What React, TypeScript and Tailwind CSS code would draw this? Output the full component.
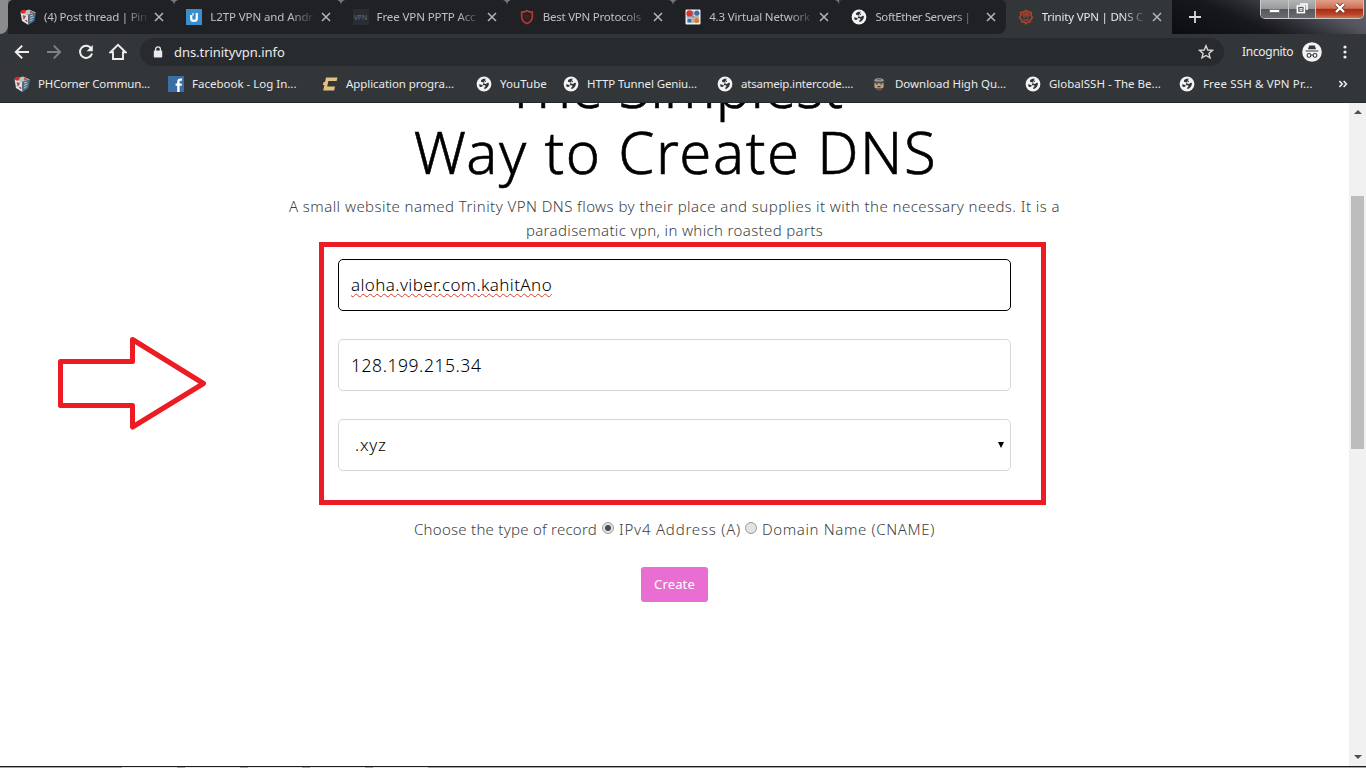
import type { ReactNode } from "react";

function Globe() {
  return (
    <svg viewBox="0 0 16 16" className="size-4 shrink-0">
      <circle cx="8" cy="8" r="7.4" fill="#f1f3f4" />
      <path
        d="M9.4 2.8 C7.4 2.6 5.6 3.2 5 4.6 C4.6 6 5.6 6.4 7 6.2 C8.4 6.1 8.6 7 8.4 8 L10.4 7.8 C11.2 6.8 12 6.6 12.9 7.2 C13 9.8 11 12.6 8.2 13.1 C8 12 8.6 11.2 9.4 10.6 C9.8 9.6 9 9.2 7.8 9.2 C6.4 9.2 5.4 8.6 4.4 8.4 L3.2 8.2 C3.1 9.2 3.4 10 3.9 10.9 L6.2 10.8 L6.6 9.2"
        fill="#303438"
      />
      <path d="M9.4 2.8 L8 4.4 L9.6 5 L9 6.2" fill="none" stroke="#303438" strokeWidth="0.9" />
    </svg>
  );
}

function Cube() {
  return (
    <svg viewBox="0 0 16 16" className="size-4 shrink-0">
      <path d="M0.5 3 L9 0.5 L16 3.5 L8 6 Z" fill="#b9c3c9" />
      <path d="M0.5 3 L8 6 L8.5 16 L2 12 Z" fill="#dfe3e4" />
      <path d="M8 6 L16 3.5 L14.4 12 L8.5 16 Z" fill="#46718f" />
      <path d="M0.8 1.6 L4.5 0.6 L6 3 L3 4.8 L1 4 Z" fill="#e32620" />
      <path d="M3 6.5 L5 9 M5.4 6.6 L3.4 10 M5.5 11 L7.2 12.6" stroke="#b8463f" strokeWidth="1.5" />
      <path d="M10 7 L13 6 M10 9.5 L13.5 8 M10 12 L12.6 10.5" stroke="#d8c2b0" strokeWidth="1" />
      <path d="M10 2.3 L12.5 3.2 L10 4" stroke="#c44a3d" strokeWidth="1.2" fill="none" />
    </svg>
  );
}

function BlueU() {
  return (
    <svg viewBox="0 0 16 16" className="size-4 shrink-0">
      <rect width="16" height="16" fill="#3a8ecb" />
      <path d="M5.2 6 V9.4 C5.2 12.6 10.8 12.6 10.8 9.4 V4" fill="none" stroke="#fff" strokeWidth="2.2" />
      <path d="M7 4 V6.6" stroke="#fff" strokeWidth="1.2" />
    </svg>
  );
}

function VpnBadge() {
  return (
    <span className="flex size-4 shrink-0 items-center justify-center bg-[#292c31] text-[7px] leading-none text-[#66717a]">
      VPN
    </span>
  );
}

function Shield() {
  return (
    <svg viewBox="0 0 16 16" className="size-4 shrink-0">
      <path d="M8 1.8 C6 3 4 3.2 2.7 3.2 V8 C2.7 11.4 5.4 13.4 8 14.6 C10.6 13.4 13.3 11.4 13.3 8 V3.2 C12 3.2 10 3 8 1.8 Z" fill="#2a1f21" stroke="#b8382f" strokeWidth="1.7" />
      <rect x="6" y="6" width="4" height="3.6" fill="#3f2627" />
    </svg>
  );
}

function Grid4() {
  return (
    <svg viewBox="0 0 16 16" className="size-4 shrink-0">
      <rect x="0.5" y="0.5" width="15" height="15" rx="1" fill="#f0f0f0" />
      <circle cx="4.6" cy="4.4" r="3.2" fill="#df3330" />
      <circle cx="11.8" cy="4.2" r="2.6" fill="#3c6ea6" />
      <rect x="2.4" y="9.6" width="4.2" height="4" fill="#3c6ea6" />
      <circle cx="11.6" cy="11.4" r="2.6" fill="#d37c3f" />
      <path d="M1.5 8 H14 M8 2 V14" stroke="#53616d" strokeWidth="0.8" />
    </svg>
  );
}

function Trinity() {
  return (
    <svg viewBox="0 0 16 16" className="size-4 shrink-0" fill="none" stroke="#ad432f">
      <path d="M8 1.5 L10.6 3 L13.4 3.6 L13 6.4 L14.4 8.6 L12.6 10.6 L12 13 L9.6 13 L8 14.8 L6.4 13 L4 13 L3.4 10.6 L1.6 8.6 L3 6.4 L2.6 3.6 L5.4 3 Z" strokeWidth="1.6" />
      <path d="M4 5.8 H12 M5 8.2 H7 M9 8.2 H11 M5 10.8 H11 M8 3 V8 M6 3.4 V5.6 M10 3.4 V5.6" strokeWidth="1.3" />
    </svg>
  );
}

function FacebookIcon() {
  return (
    <svg viewBox="0 0 16 16" className="size-4 shrink-0">
      <rect width="16" height="16" fill="#3a6ea5" />
      <path d="M14 3.6 H12.4 C11 3.6 10.4 4.4 10.4 5.8 V16 M7.6 8.6 H13.8" fill="none" stroke="#fff" strokeWidth="2.4" />
    </svg>
  );
}

function GoldC() {
  return (
    <svg viewBox="0 0 16 16" className="size-4 shrink-0">
      <path d="M4 1.5 H15.5 L14.6 5 H6.4 L5.2 10.6 H13 L12.2 14.4 H1.2 L2.4 9 H0.8 L1.6 6 H3 Z" fill="#e3c184" />
    </svg>
  );
}

function Mascot() {
  return (
    <svg viewBox="0 0 16 16" className="size-4 shrink-0">
      <path d="M3 5 C3 1 13 1 13 5 Z" fill="#8f989d" />
      <rect x="3.4" y="5" width="9.2" height="7.6" rx="2" fill="#c8a27c" />
      <path d="M2.4 6.4 H13.4" stroke="#4d4a45" strokeWidth="1.8" />
      <path d="M6 3.4 H10" stroke="#4c7287" strokeWidth="1.4" />
      <path d="M5 8 H6.8 M9.2 8 H11 M6.4 10.6 H9.6" stroke="#4b3526" strokeWidth="1.2" />
      <path d="M4.4 12.6 H11.6 L10 14.4 H6 Z" fill="#65533f" />
    </svg>
  );
}

type Tab = { icon: ReactNode; title: string; cls: string; active?: boolean };

const tabs: Tab[] = [
  { icon: <Cube />, title: "(4) Post thread | Pin", cls: "tracking-[-0.25px]" },
  { icon: <BlueU />, title: "L2TP VPN and Andr", cls: "tracking-[-0.1px]" },
  { icon: <VpnBadge />, title: "Free VPN PPTP Acc", cls: "tracking-[-0.1px]" },
  { icon: <Shield />, title: "Best VPN Protocols", cls: "tracking-[-0.25px]" },
  { icon: <Grid4 />, title: "4.3 Virtual Network", cls: "tracking-[-0.15px]" },
  { icon: <Globe />, title: "SoftEther Servers |", cls: "tracking-[-0.4px]" },
  { icon: <Trinity />, title: "Trinity VPN | DNS C", cls: "tracking-[-0.2px]", active: true },
];

const bookmarks: { icon: ReactNode; title: string; cls: string }[] = [
  { icon: <Cube />, title: "PHCorner Commun...", cls: "w-[154px] tracking-[-0.17px]" },
  { icon: <FacebookIcon />, title: "Facebook - Log In...", cls: "w-[154px]" },
  { icon: <GoldC />, title: "Application progra...", cls: "w-[154px] tracking-[-0.07px]" },
  { icon: <Globe />, title: "YouTube", cls: "w-[87px] tracking-[0.05px]" },
  { icon: <Globe />, title: "HTTP Tunnel Geniu...", cls: "w-[154px] tracking-[-0.12px]" },
  { icon: <Globe />, title: "atsameip.intercode....", cls: "w-[154px] tracking-[-0.2px]" },
  { icon: <Mascot />, title: "Download High Qu...", cls: "w-[154px] tracking-[-0.03px]" },
  { icon: <Globe />, title: "GlobalSSH - The Be...", cls: "w-[154px]" },
  { icon: <Globe />, title: "Free SSH & VPN Pr...", cls: "w-[159px] tracking-[0.15px]" },
];

function CloseX() {
  return (
    <svg viewBox="0 0 10 10" className="size-[10px] shrink-0" stroke="#b4b7ba" strokeWidth="1.5">
      <path d="M1 1 L9 9 M9 1 L1 9" />
    </svg>
  );
}

function TabStrip() {
  return (
    <div className="flex h-[34px] bg-[#77787b]">
      <div className="w-[8px] shrink-0 bg-[#323639]">
        <div className="h-full rounded-br-[8px] bg-[#8b8c8e]" />
      </div>
      <div className="flex w-[1164px] shrink-0">
        {tabs.map((t, i) => (
          <div key={t.title} className={i >= 5 ? "min-w-0 flex-1 bg-[#323639]" : "min-w-0 flex-1"}>
            <div
              className={
                "relative flex h-full items-center pr-[10px] pl-[12px] " +
                (t.active
                  ? "rounded-t-[6px] bg-[#323639]"
                  : "rounded-t-[5px] bg-[#202124]" + (i === 5 ? " rounded-br-[8px]" : ""))
              }
            >
              {t.icon}
              <div
                className={
                  "ml-2 w-[108px] text-[11.5px] leading-4 whitespace-nowrap [mask-image:linear-gradient(to_right,#000_74%,transparent_98%)] " +
                  (t.active ? "text-[#e6e8ea] " : "text-[#bdc1c5] ") +
                  t.cls
                }
              >
                {t.title}
              </div>
              <div className="ml-auto flex">
                <CloseX />
              </div>
              {i < 5 && <div className="absolute top-[7px] -right-px h-5 w-px bg-[#5b5e62]" />}
            </div>
          </div>
        ))}
      </div>
      <div className="flex flex-1 justify-between bg-[linear-gradient(24deg,#0c0d10_0%,#17181c_38%,#2b2b32_52%,#55555f_74%,#656472_100%)] pr-[2px] pl-[16px]">
        <svg viewBox="0 0 14 14" className="mt-[10px] size-[14px]" stroke="#d6d8da" strokeWidth="1.8">
          <path d="M7 1 V13 M1 7 H13" />
        </svg>
        <div className="flex h-[19px] w-[104px] overflow-hidden rounded-b-[5px] border border-t-0 border-[#c9c9cc]">
          <div className="flex w-[28px] items-end justify-center border-r border-[#c9c9cc] bg-[linear-gradient(#b4b5b7_0%,#98999c_48%,#56575c_52%,#6a6b71_100%)] pb-[5px]">
            <div className="h-[4px] w-[11px] border border-[#77787c] bg-white" />
          </div>
          <div className="flex w-[27px] items-center justify-center border-r border-[#c9c9cc] bg-[linear-gradient(#b4b5b7_0%,#98999c_48%,#56575c_52%,#6a6b71_100%)]">
            <svg viewBox="0 0 12 12" className="-mt-[2px] size-[12px]" fill="none" stroke="#fff" strokeWidth="1.6">
              <path d="M4 2 H11 V8" />
              <rect x="1.4" y="4" width="7" height="6.6" fill="#55565b" />
              <rect x="4" y="6.4" width="2" height="2" strokeWidth="0.8" />
            </svg>
          </div>
          <div className="flex flex-1 items-center justify-center bg-[linear-gradient(#e0a08c_0%,#cf6f52_46%,#a92b16_52%,#b8452a_80%,#d0764c_100%)]">
            <svg viewBox="0 0 12 10" className="-mt-[2px] h-[10px] w-[12px]">
              <path d="M2 1 L10 9 M10 1 L2 9" stroke="#5b332c" strokeWidth="3.8" />
              <path d="M2 1 L10 9 M10 1 L2 9" stroke="#fff" strokeWidth="2.4" />
            </svg>
          </div>
        </div>
      </div>
    </div>
  );
}

function Toolbar() {
  return (
    <div className="flex h-9 items-center bg-[#323639] pl-[14px]">
      <svg viewBox="0 0 16 16" className="size-4" fill="none" stroke="#eceeef" strokeWidth="2">
        <path d="M15 8 H2 M8.2 1.6 L1.8 8 L8.2 14.4" />
      </svg>
      <svg viewBox="0 0 16 16" className="ml-4 size-4" fill="none" stroke="#7f8386" strokeWidth="1.8">
        <path d="M1 8 H14 M7.8 1.6 L14.2 8 L7.8 14.4" />
      </svg>
      <svg viewBox="0 0 16 16" className="ml-4 size-4" fill="none" stroke="#eceeef" strokeWidth="2">
        <path d="M13.3 4.6 A6.1 6.1 0 1 0 14 9.4" />
        <path d="M14.8 1 V7.2 H8.6 Z" fill="#eceeef" stroke="none" />
      </svg>
      <svg viewBox="0 0 18 18" className="ml-[15px] size-[18px]" fill="none" stroke="#eceeef" strokeWidth="1.9">
        <path d="M1.4 9.3 H4 V16 H14 V9.3 H16.6 L9 1.9 Z" />
      </svg>
      <div className="ml-[13px] flex h-7 w-[1084px] items-center rounded-full bg-[#282b2e] pr-[10px] pl-[13px]">
        <svg viewBox="0 0 10 12" className="h-3 w-[10px]">
          <rect x="0.8" y="4.6" width="8.4" height="7" rx="0.8" fill="#e8eaed" />
          <path d="M2.6 5 V3.2 C2.6 0.2 7.4 0.2 7.4 3.2 V5" fill="none" stroke="#e8eaed" strokeWidth="1.3" />
        </svg>
        <span className="ml-[11px] text-[13px] leading-4 tracking-[-0.05px] text-[#e8eaed]">dns.trinityvpn.info</span>
        <svg viewBox="0 0 16 16" className="ml-auto size-4" fill="none" stroke="#d5d7d9" strokeWidth="1.4">
          <path d="M8 1.8 L9.8 6 L14.4 6.4 L10.9 9.4 L12 13.9 L8 11.5 L4 13.9 L5.1 9.4 L1.6 6.4 L6.2 6 Z" />
        </svg>
      </div>
      <span className="ml-[18px] w-[60px] text-[12px] leading-4 tracking-[-0.3px] text-[#e8eaed]">Incognito</span>
      <svg viewBox="0 0 20 20" className="size-5">
        <circle cx="10" cy="10" r="9.8" fill="#f1f3f4" />
        <path d="M7.2 3.6 H12.8 L14 7.2 H6 Z M3.6 8.4 H16.4 V9.6 H3.6 Z" fill="#35383c" />
        <circle cx="7" cy="13.4" r="1.9" fill="none" stroke="#35383c" strokeWidth="1.1" />
        <circle cx="13" cy="13.4" r="1.9" fill="none" stroke="#35383c" strokeWidth="1.1" />
        <path d="M9 13 H11" stroke="#35383c" strokeWidth="1" />
      </svg>
      <svg viewBox="0 0 4 16" className="ml-[20.5px] h-4 w-1" fill="#eceeef">
        <circle cx="2" cy="3" r="1.6" />
        <circle cx="2" cy="8" r="1.6" />
        <circle cx="2" cy="13" r="1.6" />
      </svg>
    </div>
  );
}

function BookmarkBar() {
  return (
    <div className="flex h-[33px] items-center border-b border-[#26282b] bg-[#323639] pb-[5px] pl-[14px]">
      {bookmarks.map((b) => (
        <div key={b.title} className={"flex shrink-0 items-center gap-2 text-[11.5px] leading-4 whitespace-nowrap text-[#e8eaed] " + b.cls}>
          {b.icon}
          <span>{b.title}</span>
        </div>
      ))}
      <svg viewBox="0 0 10 8" className="mt-px h-2 w-[10px] shrink-0" fill="none" stroke="#eceeef" strokeWidth="1.6">
        <path d="M1.4 1 L4.2 4 L1.4 7 M5.6 1 L8.4 4 L5.6 7" />
      </svg>
    </div>
  );
}

function Radio({ checked }: { checked?: boolean }) {
  return (
    <span className="-mt-[3px] flex size-[12px] items-center justify-center rounded-full border border-[#9c9e9e] bg-[#e2e4e4]">
      {checked && <span className="size-[6px] rounded-full bg-[#4a4c4e]" />}
    </span>
  );
}

function Page() {
  return (
    <div className="relative w-[1349px] overflow-hidden bg-white">
      <h1 className="-mt-[50px] text-center text-[58px] leading-[66px] font-light text-black [-webkit-text-stroke:0.6px_#000]">
        <span className="block tracking-[0.1px]">The Simplest</span>
        <span className="block pl-[2px] tracking-[1.6px]">Way to Create DNS</span>
      </h1>
      <p className="mx-auto mt-[9px] w-[790px] text-center text-[15px] leading-6 font-light whitespace-nowrap text-[#3c3f42]">
        <span className="tracking-[0.445px]">
          A small website named Trinity VPN DNS flows by their place and supplies it with the necessary needs. It is a
        </span>
        <br />
        <span className="tracking-[0.36px]">paradisematic vpn, in which roasted parts</span>
      </p>
      <div className="ml-[319px] flex h-[263px] w-[727px] flex-col gap-7 border-[5px] border-[#ec1c24] pt-3 pl-[14px] text-[17px] leading-6 text-[#25282b]">
        <div className="flex h-[52px] w-[673px] items-center rounded-[5px] border border-black px-3 font-light">
          <span className="tracking-[0.4px] text-black underline decoration-[#d0402f] decoration-wavy decoration-[1px] underline-offset-[2px] [text-decoration-skip-ink:none]">
            aloha.viber.com.kahitAno
          </span>
        </div>
        <div className="flex h-[52px] w-[673px] items-center rounded-[5px] border border-[#d5d8da] px-3 pb-px">
          <span className="text-[17.5px] font-light tracking-[0.55px] text-black">128.199.215.34</span>
        </div>
        <div className="flex h-[52px] w-[673px] items-center justify-between rounded-[5px] border border-[#d5d8da] pr-[6px] pl-4">
          <span className="font-light tracking-[0.8px] text-black">.xyz</span>
          <svg viewBox="0 0 6 6" className="h-[6px] w-[6px]">
            <path d="M0 0 H6 L3 6 Z" fill="#000" />
          </svg>
        </div>
      </div>
      <div className="mt-[12px] ml-[414px] flex h-6 items-center text-[15px] leading-6 font-light whitespace-nowrap text-[#3c3f42]">
        <span className="w-[188px] tracking-[0.26px]">Choose the type of record</span>
        <Radio checked />
        <span className="ml-[5px] w-[126px] tracking-[0.79px]">IPv4 Address (A)</span>
        <Radio />
        <span className="ml-[5px] tracking-[0.63px]">Domain Name (CNAME)</span>
      </div>
      <div className="mt-[26px] ml-[641px] flex h-[35px] w-[67px] items-center justify-center rounded-[3px] bg-[#e86fd1] text-[13px] tracking-[0.15px] text-white">
        Create
      </div>
      <svg viewBox="0 0 160 100" className="absolute top-[230px] left-[50px] h-[100px] w-[160px]" fill="none" stroke="#ec1c24" strokeWidth="5" strokeLinejoin="round">
        <path d="M10.5 28.5 H82.5 V6.5 L153.5 50.5 L82.5 94 V72.5 H10.5 Z" />
      </svg>
    </div>
  );
}

function Scrollbar() {
  return (
    <div className="flex w-[17px] flex-col items-center bg-[#f1f1f1]">
      <svg viewBox="0 0 8 4" className="mt-[7px] h-1 w-2">
        <path d="M4 0 L8 4 H0 Z" fill="#505050" />
      </svg>
      <div className="mt-[82px] h-[253px] w-[13px] bg-[#bcbebe]" />
      <svg viewBox="0 0 8 4" className="mt-auto mb-[7px] h-1 w-2">
        <path d="M4 4 L8 0 H0 Z" fill="#505050" />
      </svg>
    </div>
  );
}

export default function App() {
  return (
    <div className="flex h-[768px] w-[1366px] flex-col overflow-hidden font-['Noto_Sans','Liberation_Sans',sans-serif]">
      <TabStrip />
      <Toolbar />
      <BookmarkBar />
      <div className="flex min-h-0 flex-1">
        <Page />
        <Scrollbar />
      </div>
      <div className="flex h-[2px] shrink-0 border-t border-[#1d1d1d] bg-[#a5a5a5]">
        <div className="ml-[122px] flex w-[306px] gap-2">
          <div className="flex-1 bg-[#e6e6e6]" />
          <div className="flex-1 bg-[#e6e6e6]" />
          <div className="flex-1 bg-[#e6e6e6]" />
          <div className="flex-1 bg-[#e6e6e6]" />
          <div className="flex-1 bg-[#e6e6e6]" />
        </div>
      </div>
    </div>
  );
}
